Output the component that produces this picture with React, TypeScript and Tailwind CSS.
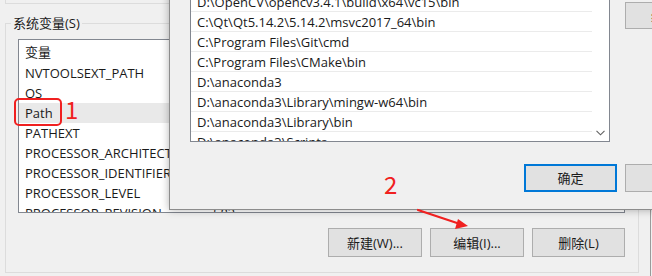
const SYS_VARS = [
  { name: 'NVTOOLSEXT_PATH', value: '' },
  { name: 'OS', value: '' },
  { name: 'Path', value: '' },
  { name: 'PATHEXT', value: '' },
  { name: 'PROCESSOR_ARCHITECTURE', value: '' },
  { name: 'PROCESSOR_IDENTIFIER', value: '' },
  { name: 'PROCESSOR_LEVEL', value: '' },
  { name: 'PROCESSOR_REVISION', value: '583' },
];

const PATH_ITEMS = [
  'D:\\OpenCV\\opencv3.4.1\\build\\x64\\vc15\\bin',
  'C:\\Qt\\Qt5.14.2\\5.14.2\\msvc2017_64\\bin',
  'C:\\Program Files\\Git\\cmd',
  'C:\\Program Files\\CMake\\bin',
  'D:\\anaconda3',
  'D:\\anaconda3\\Library\\mingw-w64\\bin',
  'D:\\anaconda3\\Library\\bin',
  'D:\\anaconda3\\Scripts',
];

function WinButton({ label, primary = false, className = '' }: { label: string; primary?: boolean; className?: string }) {
  return (
    <div
      className={`flex items-center justify-center bg-[#e1e1e1] border text-[13px] text-[#1a1a1a] ${
        primary ? 'border-[#0078d7] shadow-[inset_0_0_0_1px_#0078d7]' : 'border-[#adadad]'
      } ${className}`}
    >
      {label}
    </div>
  );
}

export default function App() {
  return (
    <div className="relative w-[652px] h-[276px] overflow-hidden bg-[#f0f0f0] font-[Open_Sans,Noto_Sans_CJK_SC,sans-serif] text-[13px] text-[#1a1a1a] leading-[20px]">
      {/* bottom of the user variables group */}
      <div className="ml-[5px] w-[634px] h-[4px] border-l border-b border-[#dcdcdc]" />

      {/* system variables group */}
      <div className="relative mt-[19px] ml-[5px] w-[634px] h-[250px] border border-[#dcdcdc]">
        <span className="absolute -top-[11px] left-[5px] bg-[#f0f0f0] px-[2px]">系统变量(S)</span>

        <div className="mt-[15px] ml-[12px] w-[607px] h-[174px] border border-[#828790] bg-white overflow-hidden">
          <div className="flex h-[23px] items-center">
            <span className="w-[194px] shrink-0 pl-[6px]">变量</span>
          </div>
          {SYS_VARS.map(v => (
            <div key={v.name} className={`flex h-[20px] items-center ${v.name === 'Path' ? 'bg-[#e9e9e9]' : ''}`}>
              <span className="w-[194px] shrink-0 pl-[6px] whitespace-nowrap overflow-hidden pb-[3px] -mb-[3px]">{v.name}</span>
              <span className="whitespace-nowrap">{v.value}</span>
            </div>
          ))}
        </div>

        <div className="mt-[15px] mr-[13px] flex justify-end gap-[8px]">
          <WinButton label="新建(W)..." className="w-[94px] h-[29px]" />
          <WinButton label="编辑(I)..." className="w-[94px] h-[29px]" />
          <WinButton label="删除(L)" className="w-[93px] h-[29px]" />
        </div>
      </div>

      <div className="absolute left-[650px] top-[209px] w-px h-[70px] bg-[#9a9a9a]" />

      {/* edit environment variable dialog */}
      <div className="absolute left-[169px] top-[-60px] w-[562px] h-[270px] bg-[#f0f0f0] border border-[#8c8c8c] shadow-[0_0_8px_rgba(0,0,0,0.3)] flex flex-col pt-[29px] pl-[20px] pr-[12px] pb-[17px]">
        <div className="flex items-start">
          <div className="mt-[21px] w-[420px] h-[151px] border border-[#828790] bg-white flex overflow-hidden">
            <div className="flex-1 min-w-0">
              {PATH_ITEMS.map(p => (
                <div key={p} className="h-[20px] border-b border-[#ebebeb] flex items-center pl-[6px] whitespace-nowrap">
                  {p}
                </div>
              ))}
            </div>
            <div className="w-[17px] shrink-0 flex flex-col justify-end items-center pb-[5px]">
              <svg width="9" height="6" viewBox="0 0 9 6" fill="none">
                <path d="M0.5 0.8 L4.5 4.8 L8.5 0.8" stroke="#606060" strokeWidth="1.1" />
              </svg>
            </div>
          </div>
          <div className="ml-[15px] mt-[32px] flex flex-col gap-[6px]">
            <WinButton label="编辑(E)" className="w-[93px] h-[27px]" />
          </div>
        </div>
        <div className="flex-1" />
        <div className="flex justify-end gap-[8px]">
          <WinButton label="确定" primary className="w-[93px] h-[28px]" />
          <WinButton label="取消" className="w-[93px] h-[28px]" />
        </div>
      </div>

      {/* annotations */}
      <div className="absolute left-[14px] top-[98px] w-[48px] h-[28px] border-2 border-[#f02020] rounded-[5px]" />
      <span className="absolute left-[65px] top-[95px] text-[24px] leading-[28px] text-[#f02020] font-[Noto_Sans_CJK_SC,sans-serif]">1</span>
      <span className="absolute left-[384px] top-[170px] text-[24px] leading-[28px] text-[#f02020] font-[Noto_Sans_CJK_SC,sans-serif]">2</span>
      <svg className="absolute left-[410px] top-[204px]" width="66" height="30" viewBox="0 0 66 30">
        <path d="M8 6 L50 20" stroke="#f02020" strokeWidth="2.2" strokeLinecap="round" />
        <path d="M58 22 L45 25 L48 15 Z" fill="#f02020" />
      </svg>
    </div>
  );
}
